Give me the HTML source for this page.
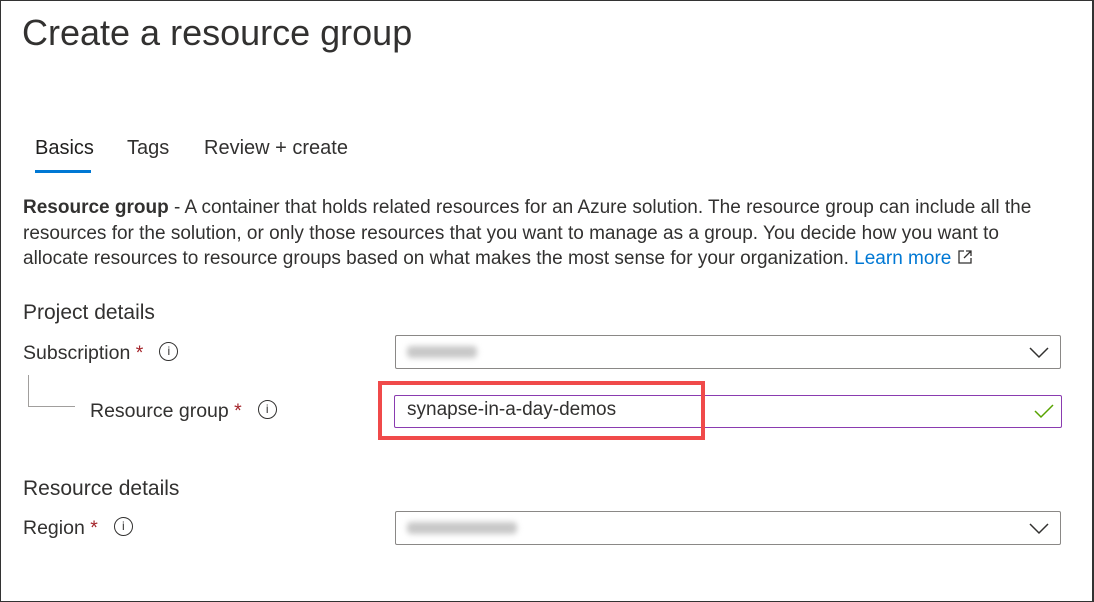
<!DOCTYPE html>
<html><head><meta charset="utf-8"><style>
*{margin:0;padding:0;box-sizing:border-box}
body{width:1094px;height:602px;background:#fff;font-family:"Liberation Sans",sans-serif;color:#323130;position:relative;overflow:hidden}
.frame{position:absolute;left:0;top:0;width:1094px;height:602px;border:1px solid #333;border-right-width:2px}
.a{position:absolute;white-space:nowrap}
.box{position:absolute;border:1px solid #8a8886;border-radius:2px;background:#fff}
.star{color:#a4262c}
.info{display:inline-block;width:19px;height:19px;border:1.3px solid #323130;border-radius:50%;font-size:12px;text-align:center;line-height:17px;vertical-align:middle;margin-left:16px;position:relative;top:-2px}
.blur{position:absolute;height:12px;background:#c8c8c8;filter:blur(3px);border-radius:4px}
</style></head><body>
<div class="frame"></div>
<div class="a" style="left:22px;top:12px;font-size:36px;color:#323130">Create a resource group</div>
<div class="a" style="left:35px;top:137px;font-size:20px;color:#201f1e">Basics</div>
<div class="a" style="left:127px;top:137px;font-size:20px">Tags</div>
<div class="a" style="left:204px;top:137px;font-size:20px">Review + create</div>
<div class="a" style="left:35px;top:170px;width:56px;height:3px;background:#0078d4"></div>
<div class="a" style="left:23px;top:195px;font-size:19px;line-height:25.5px">
<b style="font-weight:600">Resource group</b> - A container that holds related resources for an Azure solution. The resource group can include all the<br>
resources for the solution, or only those resources that you want to manage as a group. You decide how you want to<br>
allocate resources to resource groups based on what makes the most sense for your organization. <span style="color:#0078d4">Learn more</span> <svg width="16" height="16" viewBox="0 0 16 16" style="vertical-align:-1px"><path d="M7 2H2v12h12V9M9 2h5v5M14 2L7 9" fill="none" stroke="#323130" stroke-width="1.3"/></svg></div>
<div class="a" style="left:23px;top:301px;font-size:21px">Project details</div>
<div class="a" style="left:23px;top:342px;font-size:19.5px">Subscription <span class="star">*</span><span class="info">i</span></div>
<div class="a" style="left:28px;top:375px;width:1px;height:32px;background:#a19f9d"></div>
<div class="a" style="left:28px;top:406px;width:47px;height:1px;background:#a19f9d"></div>
<div class="a" style="left:90px;top:400px;font-size:19.5px">Resource group <span class="star">*</span><span class="info">i</span></div>
<div class="box" style="left:395px;top:335px;width:666px;height:34px"></div>
<div class="blur" style="left:407px;top:346px;width:70px"></div>
<svg class="a" style="left:1029px;top:345px" width="20" height="14" viewBox="0 0 20 14"><path d="M1 3l9 9 9-9" fill="none" stroke="#323130" stroke-width="1.5"/></svg>
<div class="box" style="left:394px;top:395px;width:668px;height:33px;border-color:#8a3bb0"></div>
<div class="a" style="left:407px;top:399px;font-size:19px">synapse-in-a-day-demos</div>
<svg class="a" style="left:1034px;top:403px" width="20" height="16" viewBox="0 0 20 16"><path d="M1 8l6 6L19 2" fill="none" stroke="#57a300" stroke-width="1.5"/></svg>
<div class="a" style="left:378px;top:381px;width:327px;height:59px;border:4px solid #f04a4a"></div>
<div class="a" style="left:23px;top:477px;font-size:21px">Resource details</div>
<div class="a" style="left:23px;top:517px;font-size:19.5px">Region <span class="star">*</span><span class="info">i</span></div>
<div class="box" style="left:395px;top:511px;width:666px;height:34px"></div>
<div class="blur" style="left:407px;top:522px;width:110px"></div>
<svg class="a" style="left:1029px;top:521px" width="20" height="14" viewBox="0 0 20 14"><path d="M1 3l9 9 9-9" fill="none" stroke="#323130" stroke-width="1.5"/></svg>
</body></html>
